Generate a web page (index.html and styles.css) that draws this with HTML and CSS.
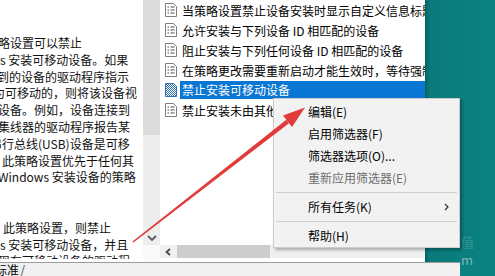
FILE: index.html
```html
<!DOCTYPE html>
<html lang="zh-CN">
<head>
    <meta charset="UTF-8">
    <title>本地组策略编辑器</title>
    <link rel="stylesheet" href="styles.css">
</head>
<body>
    <svg width="0" height="0" class="defs">
        <defs>
            <pattern id="dither" width="2" height="2" patternUnits="userSpaceOnUse">
                <rect width="2" height="2" fill="#ffffff"/>
                <rect width="1" height="1" fill="#2f6fb4"/>
                <rect x="1" y="1" width="1" height="1" fill="#2f6fb4"/>
            </pattern>
            <symbol id="doc" viewBox="0 0 12 14">
                <path d="M0.5 0.5h8l3 3v10h-11z" fill="#fff" stroke="#7d7d7d"/>
                <path d="M2.5 4h1.5M2.5 7h1.5M2.5 10h1.5M5.5 4h4M5.5 7h4M5.5 10h4" stroke="#4a4a4a"/>
            </symbol>
            <symbol id="doc-sel" viewBox="0 0 12 14">
                <path d="M0.5 0.5h8l3 3v10h-11z" fill="url(#dither)" stroke="#2f6fb4"/>
            </symbol>
        </defs>
    </svg>

    <div class="panes">
        <div class="desc">
            <div class="desc-text">
                <div class="ln" style="margin-left:-14px">策略设置可以禁止</div>
                <div class="ln">s 安装可移动设备。如果</div>
                <div class="ln" style="margin-left:-15px">接到的设备的驱动程序指示</div>
                <div class="ln" style="margin-left:-7px">为可移动的，则将该设备视</div>
                <div class="ln" style="margin-left:-14px">动设备。例如，设备连接到</div>
                <div class="ln" style="margin-left:-2px">集线器的驱动程序报告某</div>
                <div class="ln" style="margin-left:-10px">串行总线(USB)设备是可移</div>
                <div class="ln" style="margin-left:2px">此策略设置优先于任何其</div>
                <div class="ln" style="margin-left:-2px">Windows 安装设备的策略</div>
                <div class="ln">&nbsp;</div>
                <div class="ln">&nbsp;</div>
                <div class="ln" style="margin-left:3px">此策略设置，则禁止</div>
                <div class="ln">s 安装可移动设备，并且</div>
                <div class="ln" style="margin-left:-2px">现有可移动设备的驱动程</div>
            </div>
        </div>

        <div class="vbar">
            <div class="vtrack">
                <div class="vthumb"></div>
                <svg class="vdown" width="10" height="6" viewBox="0 0 10 6">
                    <path d="M1 1l4 4l4-4" fill="none" stroke="#5a5a5a" stroke-width="1.8"/>
                </svg>
            </div>
            <div class="vcorner"></div>
        </div>

        <div class="list">
            <div class="rows">
                <div class="row"><svg class="icon"><use href="#doc"/></svg><span class="label">当策略设置禁止设备安装时显示自定义信息标题</span></div>
                <div class="row"><svg class="icon"><use href="#doc"/></svg><span class="label">允许安装与下列设备 ID 相匹配的设备</span></div>
                <div class="row"><svg class="icon"><use href="#doc"/></svg><span class="label">阻止安装与下列任何设备 ID 相匹配的设备</span></div>
                <div class="row"><svg class="icon"><use href="#doc"/></svg><span class="label">在策略更改需要重新启动才能生效时，等待强制重新启动</span></div>
                <div class="row sel"><svg class="icon"><use href="#doc-sel"/></svg><span class="label">禁止安装可移动设备</span></div>
                <div class="row"><svg class="icon"><use href="#doc"/></svg><span class="label">禁止安装未由其他策略设置描述的设备</span></div>
            </div>
            <div class="hbar">
                <svg class="hleft" width="6" height="8" viewBox="0 0 6 8">
                    <path d="M5 1l-3.5 3l3.5 3" fill="none" stroke="#4a4a4a" stroke-width="1.8"/>
                </svg>
                <div class="hthumb"></div>
            </div>
        </div>

        <div class="desktop"></div>
    </div>

    <div class="tabs">
        <span class="tab">标准</span>
        <span class="tab-edge">/</span>
    </div>

    <span class="mark mark-top">值</span>
    <span class="mark mark-bottom">m</span>

    <div class="menu">
        <div class="menu-item">编辑(E)</div>
        <div class="menu-item">启用筛选器(F)</div>
        <div class="menu-item">筛选器选项(O)...</div>
        <div class="menu-item disabled">重新应用筛选器(E)</div>
        <div class="menu-sep"></div>
        <div class="menu-item">所有任务(K)
            <svg class="sub" width="5" height="8" viewBox="0 0 5 8">
                <path d="M1 1l3 3l-3 3" fill="none" stroke="#333" stroke-width="1.2"/>
            </svg>
        </div>
        <div class="menu-sep"></div>
        <div class="menu-item">帮助(H)</div>
    </div>

    <!-- red pointer drawn over the menu -->
    <svg class="pointer" width="495" height="276" viewBox="0 0 495 276">
        <polygon points="132.5,241.4 133.5,242.6 289,123.2 286.3,119.8" fill="#e23b3b"/>
        <polygon points="305,107.5 292,127 283,115.5" fill="#e23b3b"/>
    </svg>
</body>
</html>
```

FILE: styles.css
```css
body {
    margin: 0;
    width: 495px;
    height: 276px;
    overflow: hidden;
    position: relative;
    background: #0b8181;
    font-family: "Noto Sans CJK SC", "Microsoft YaHei", sans-serif;
    font-size: 12px;
    color: #111;
}

.defs {
    position: absolute;
}

.panes {
    display: flex;
    height: 262px;
}

/* description pane */
.desc {
    width: 143px;
    background: #fff;
}

.desc-text {
    height: 259px;
    overflow: hidden;
    padding-top: 35px;
    box-sizing: border-box;
    line-height: 16.8px;
}

.ln {
    white-space: nowrap;
}

.vbar {
    width: 17px;
    display: flex;
    flex-direction: column;
}

.vtrack {
    height: 245px;
    background: #ededed;
    display: flex;
    flex-direction: column;
    align-items: center;
}

.vthumb {
    width: 17px;
    height: 135px;
    background: #dcdcdc;
}

.vdown {
    margin-top: auto;
    margin-bottom: 4px;
}

.vcorner {
    flex: 1;
    background: #fafafa;
}

/* settings list */
.list {
    width: 265px;
    background: #fff;
    display: flex;
    flex-direction: column;
    overflow: hidden;
}

.rows {
    height: 245px;
}

.row {
    display: flex;
    align-items: center;
    height: 20px;
    padding-left: 5px;
    white-space: nowrap;
}

.icon {
    width: 12px;
    height: 14px;
    flex-shrink: 0;
    margin-right: 5px;
}

.label {
    color: #000;
}

.row.sel .icon {
    margin-right: 3px;
}

.row.sel .label {
    flex: 1;
    height: 18px;
    line-height: 18px;
    padding-left: 2px;
    background: #0a76d3;
    color: #fff;
}

.hbar {
    height: 13px;
    background: #f0f0f0;
    display: flex;
    align-items: center;
}

.hleft {
    margin-left: 5px;
}

.hthumb {
    width: 93px;
    height: 13px;
    margin-left: 6px;
    background: #cdcdcd;
}

.desktop {
    flex: 1;
    background: linear-gradient(to right, #066264, #0a7a7b 5px, #0b8282);
}

/* bottom tabs */
.tabs {
    width: 460px;
    height: 13px;
    border-top: 1px solid #9c9c9c;
    background: #f0f0f0;
    display: flex;
    align-items: center;
    line-height: 13px;
    overflow: hidden;
}

.tab {
    margin-left: -5px;
    color: #000;
}

.tab-edge {
    margin-left: 1px;
    color: #555;
    font-size: 13px;
}

.mark {
    position: absolute;
    left: 461px;
    color: rgba(255, 255, 255, 0.18);
    font-size: 13px;
}

.mark-top {
    top: 232px;
}

.mark-bottom {
    top: 250px;
    color: rgba(255, 255, 255, 0.45);
}

/* context menu */
.menu {
    position: absolute;
    left: 273px;
    top: 98px;
    width: 187px;
    box-sizing: border-box;
    background: #f2f2f2;
    border: 1px solid #cccccc;
    box-shadow: 2px 2px 3px rgba(0, 0, 0, 0.3);
    padding-top: 2px;
}

.menu-item {
    position: relative;
    height: 22px;
    line-height: 22px;
    padding-left: 34px;
    color: #000;
    white-space: nowrap;
}

.menu-item.disabled {
    color: #6d6d6d;
}

.menu-sep {
    height: 1px;
    margin: 3px 2px;
    background: #cfcfcf;
}

.sub {
    position: absolute;
    right: 10px;
    top: 7px;
}

.pointer {
    position: absolute;
    left: 0;
    top: 0;
}
```
